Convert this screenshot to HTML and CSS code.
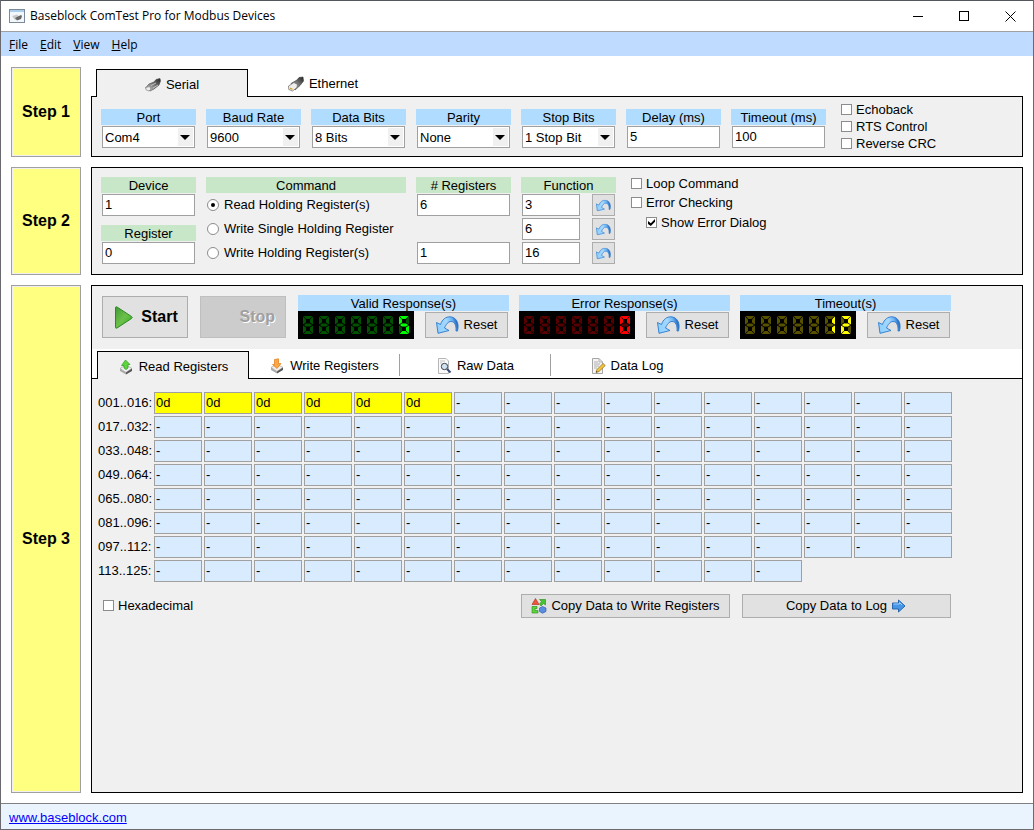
FILE: index.html
```html
<!DOCTYPE html>
<html lang="en">
<head>
<meta charset="utf-8">
<title>Baseblock ComTest Pro for Modbus Devices</title>
<link rel="stylesheet" href="styles.css">
</head>
<body>
<svg class="defs" aria-hidden="true">
  <defs>
    <linearGradient id="blue" x1="0" y1="0.5" x2="1" y2="0.3"><stop offset="0" stop-color="#8fd0ff"/><stop offset="0.5" stop-color="#a4d8ff"/><stop offset="0.75" stop-color="#6db4f4"/><stop offset="1" stop-color="#0d4fae"/></linearGradient>
    <linearGradient id="green" x1="0" y1="0" x2="1" y2="1"><stop offset="0" stop-color="#3f9a35"/><stop offset="0.5" stop-color="#6cc04a"/><stop offset="1" stop-color="#2fae1c"/></linearGradient>
    <linearGradient id="metal" x1="0" y1="1" x2="1" y2="0"><stop offset="0" stop-color="#e0e0e0"/><stop offset="0.5" stop-color="#7a7a7a"/><stop offset="1" stop-color="#222"/></linearGradient>
    <polygon id="sa" points="0.5,0 9.5,0 6.5,3 3.5,3"/>
    <polygon id="sb" points="10,0.5 10,8.5 7,6.5 7,3.5"/>
    <polygon id="sc" points="10,9.5 10,17.5 7,14.5 7,11.5"/>
    <polygon id="sd" points="0.5,18 3.5,15 6.5,15 9.5,18"/>
    <polygon id="se" points="0,9.5 3,11.5 3,14.5 0,17.5"/>
    <polygon id="sf" points="0,0.5 3,3.5 3,6.5 0,8.5"/>
    <polygon id="sg" points="1,9 3,7.5 7,7.5 9,9 7,10.5 3,10.5"/>
    <g id="n8"><use href="#sa"/><use href="#sb"/><use href="#sc"/><use href="#sd"/><use href="#se"/><use href="#sf"/><use href="#sg"/></g>
    <g id="n5"><use href="#sa"/><use href="#sf"/><use href="#sg"/><use href="#sc"/><use href="#sd"/></g>
    <g id="n0"><use href="#sa"/><use href="#sb"/><use href="#sc"/><use href="#sd"/><use href="#se"/><use href="#sf"/></g>
    <g id="n1"><use href="#sb"/><use href="#sc"/></g>
    <g id="n2"><use href="#sa"/><use href="#sb"/><use href="#sg"/><use href="#se"/><use href="#sd"/></g>
    <g id="row8"><use href="#n8" x="5" y="5"/><use href="#n8" x="21" y="5"/><use href="#n8" x="37" y="5"/><use href="#n8" x="53" y="5"/><use href="#n8" x="69" y="5"/><use href="#n8" x="85" y="5"/><use href="#n8" x="101" y="5"/></g>
  </defs>
  <symbol id="undo" viewBox="0 0 23 18">
    <path d="M0.500 6.500 L4.500 8.500 C6 3.500 10 0.600 14 0.800 C20 1.200 23.500 6.500 21.500 15 H20 C20.500 9 18.500 5.500 15 5.500 C12 5.500 10 8.500 8.500 12 L13 14.500 L2 17.300 Z" fill="url(#blue)" stroke="#2878cc" stroke-width="0.900" stroke-linejoin="round"/>
  </symbol>
  <symbol id="disk" viewBox="0 0 16 16">
    <path d="M2 9.500 L8 6 L14 9.500 L8 13.500 Z" fill="#eee" stroke="#999" stroke-width="0.600"/>
    <path d="M2 9.500 L8 13.500 L8 15.500 L2 12 Z" fill="#aaa"/>
    <path d="M14 9.500 L8 13.500 L8 15.500 L14 12 Z" fill="#555"/>
  </symbol>
</svg>

<div class="window">
  <header class="titlebar">
    <svg class="appicon" viewBox="0 0 16 14" aria-hidden="true">
      <rect x="0.500" y="0.500" width="15" height="13" fill="#f2f7fc" stroke="#7d8994"/>
      <rect x="1" y="1" width="14" height="2" fill="#a9cdec"/>
      <path d="M3 7 L8 5.500 L11 8 L6 11 Z" fill="#c9c9c9"/>
      <path d="M6 9 L12 6 L13 7 L12 10 L8 11.500 Z" fill="#666"/>
    </svg>
    <h1 class="title">Baseblock ComTest Pro for Modbus Devices</h1>
    <div class="winbtns">
      <button type="button" aria-label="Minimize"><svg viewBox="0 0 11 11"><path d="M0 5.500 H10" /></svg></button>
      <button type="button" aria-label="Maximize"><svg viewBox="0 0 11 11"><rect x="0.500" y="0.500" width="9" height="9"/></svg></button>
      <button type="button" aria-label="Close"><svg viewBox="0 0 11 11"><path d="M0.500 0.500 L10.500 10.500 M10.500 0.500 L0.500 10.500"/></svg></button>
    </div>
  </header>
  <nav class="menubar">
    <button type="button"><u>F</u>ile</button>
    <button type="button"><u>E</u>dit</button>
    <button type="button"><u>V</u>iew</button>
    <button type="button"><u>H</u>elp</button>
  </nav>

  <main class="steps">
    <h2 class="step">Step 1</h2>
    <section class="connection">
      <div class="tabs" role="tablist">
        <button type="button" class="tab active" role="tab" aria-selected="true">
          <svg class="i16" viewBox="0 0 16 16"><path d="M0.500 11 L4 7 L9 5 L11 2.500 L15 1.500 L15.500 4 L14 8 L9 12 L5 14 Z" fill="url(#metal)" stroke="#444" stroke-width="0.600"/><path d="M0.800 10.500 L4.500 9.500 L6 12 L4 14 L1 12.800 Z" fill="#eee" stroke="#777" stroke-width="0.600"/><path d="M6 8.500 L11 6 M8 11 L13 8" stroke="#ddd" stroke-width="0.700"/></svg>Serial</button>
        <button type="button" class="tab" role="tab" aria-selected="false">
          <svg class="i16" viewBox="0 0 16 16"><path d="M3 7.500 L9 4 L11 1.500 L15 1 L15.500 5 L12 9.500 L7 14 Z" fill="url(#metal)" stroke="#333" stroke-width="0.600"/><path d="M0.500 10 L6 6.500 L9.500 8.500 L9 11.500 L4.500 15 L0.800 13.500 Z" fill="#eee" stroke="#666" stroke-width="0.700"/><path d="M2 11.500 L4.500 12.500 V14 L2 13 Z" fill="#d2a528"/></svg>Ethernet</button>
      </div>
      <form class="panel serial">
        <div class="field"><label class="cap blue" for="port">Port</label><span class="sel"><select id="port"><option>Com4</option></select></span></div>
        <div class="field"><label class="cap blue" for="baud">Baud Rate</label><span class="sel"><select id="baud"><option>9600</option></select></span></div>
        <div class="field"><label class="cap blue" for="bits">Data Bits</label><span class="sel"><select id="bits"><option>8 Bits</option></select></span></div>
        <div class="field"><label class="cap blue" for="parity">Parity</label><span class="sel"><select id="parity"><option>None</option></select></span></div>
        <div class="field"><label class="cap blue" for="stopbits">Stop Bits</label><span class="sel"><select id="stopbits"><option>1 Stop Bit</option></select></span></div>
        <div class="field"><label class="cap blue" for="delay">Delay (ms)</label><input class="txt" id="delay" type="text" value="5"></div>
        <div class="field"><label class="cap blue" for="timeout">Timeout (ms)</label><input class="txt" id="timeout" type="text" value="100"></div>
        <div class="checks tight">
          <label><input type="checkbox">Echoback</label>
          <label><input type="checkbox">RTS Control</label>
          <label><input type="checkbox">Reverse CRC</label>
        </div>
      </form>
    </section>

    <h2 class="step">Step 2</h2>
    <form class="panel command">
      <div class="field stack">
        <div class="field"><label class="cap green" for="device">Device</label><input class="txt" id="device" type="text" value="1"></div>
        <div class="field"><label class="cap green" for="register">Register</label><input class="txt" id="register" type="text" value="0"></div>
      </div>
      <div class="field wide" role="radiogroup" aria-labelledby="cmd">
        <span class="cap green" id="cmd">Command</span>
        <div class="rows">
          <label class="radio"><input type="radio" name="cmd" checked>Read Holding Register(s)</label>
          <label class="radio"><input type="radio" name="cmd">Write Single Holding Register</label>
          <label class="radio"><input type="radio" name="cmd">Write Holding Register(s)</label>
        </div>
      </div>
      <div class="field">
        <span class="cap green" id="nreg"># Registers</span>
        <div class="rows">
          <input class="txt" type="text" value="6" aria-labelledby="nreg">
          <span class="row"></span>
          <input class="txt" type="text" value="1" aria-labelledby="nreg">
        </div>
      </div>
      <div class="field">
        <span class="cap green" id="fn">Function</span>
        <div class="rows">
          <div class="row"><input class="txt short" type="text" value="3" aria-labelledby="fn"><button type="button" class="btn mini" aria-label="Reset function"><svg viewBox="0 0 23 18"><use href="#undo"/></svg></button></div>
          <div class="row"><input class="txt short" type="text" value="6" aria-labelledby="fn"><button type="button" class="btn mini" aria-label="Reset function"><svg viewBox="0 0 23 18"><use href="#undo"/></svg></button></div>
          <div class="row"><input class="txt short" type="text" value="16" aria-labelledby="fn"><button type="button" class="btn mini" aria-label="Reset function"><svg viewBox="0 0 23 18"><use href="#undo"/></svg></button></div>
        </div>
      </div>
      <div class="checks">
        <label><input type="checkbox">Loop Command</label>
        <label><input type="checkbox">Error Checking</label>
        <label class="sub"><input type="checkbox" checked>Show Error Dialog</label>
      </div>
    </form>

    <h2 class="step">Step 3</h2>
    <section class="panel run">
      <div class="runbar">
        <div class="runbtns">
          <button type="button" class="btn big"><svg class="play" viewBox="0 0 20 23"><path d="M1.500 1.500 Q1.500 0.500 3 1 L17.500 10.500 Q19 11.500 17.500 12.500 L3 22 Q1.500 22.500 1.500 21.500 Z" fill="url(#green)" stroke="#2c8a22"/></svg>Start</button>
          <button type="button" class="btn big" disabled>Stop</button>
        </div>
        <div class="counters">
          <div class="counter">
            <span class="cap blue">Valid Response(s)</span>
            <div class="meter"><svg class="led" viewBox="0 0 116 28" role="img" aria-label="5"><use href="#row8" fill="#005200"/><use href="#n5" x="101" y="5" fill="#00ff00"/></svg>
            <button type="button" class="btn reset"><svg viewBox="0 0 23 18"><use href="#undo"/></svg>Reset</button></div>
          </div>
          <div class="counter">
            <span class="cap blue">Error Response(s)</span>
            <div class="meter"><svg class="led" viewBox="0 0 116 28" role="img" aria-label="0"><use href="#row8" fill="#560000"/><use href="#n0" x="101" y="5" fill="#ff0000"/></svg>
            <button type="button" class="btn reset"><svg viewBox="0 0 23 18"><use href="#undo"/></svg>Reset</button></div>
          </div>
          <div class="counter">
            <span class="cap blue">Timeout(s)</span>
            <div class="meter"><svg class="led" viewBox="0 0 116 28" role="img" aria-label="12"><use href="#row8" fill="#585200"/><use href="#n1" x="85" y="5" fill="#ffff00"/><use href="#n2" x="101" y="5" fill="#ffff00"/></svg>
            <button type="button" class="btn reset"><svg viewBox="0 0 23 18"><use href="#undo"/></svg>Reset</button></div>
          </div>
        </div>
      </div>

      <div class="tabs views" role="tablist">
        <button type="button" class="tab active" role="tab" aria-selected="true">
          <svg class="i16" viewBox="0 0 16 16"><use href="#disk"/><path d="M7.500 1 L12 5.500 H10 V9 L8 10.500 L6 9 V6.500 L3.500 6.500 Z" fill="#5fd43c" stroke="#2c9a1c" stroke-width="0.700"/></svg>Read Registers</button>
        <button type="button" class="tab" role="tab" aria-selected="false">
          <svg class="i16" viewBox="0 0 16 16"><use href="#disk"/><path d="M5.500 1.500 L9.500 0.800 V5.500 H12 L8 10.500 L3.500 6.500 H5.500 Z" fill="#ffa640" stroke="#e07a18" stroke-width="0.700"/></svg>Write Registers</button>
        <button type="button" class="tab" role="tab" aria-selected="false">
          <svg class="i16" viewBox="0 0 16 16"><path d="M2.500 0.500 H10 L12.500 3 V15.500 H2.500 Z" fill="#fafafa" stroke="#b5b5b5"/><path d="M4 3 H9 M4 5 H6" stroke="#c5c5c5"/><circle cx="8.500" cy="8.500" r="3.200" fill="#cfe3f6" stroke="#444"/><path d="M11 11 L14.500 14.500" stroke="#3a4a78" stroke-width="2"/></svg>Raw Data</button>
        <button type="button" class="tab" role="tab" aria-selected="false">
          <svg class="i16" viewBox="0 0 16 16"><path d="M2.500 0.500 H9 L12.500 4 V15.500 H2.500 Z" fill="#f4f4f4" stroke="#a5a5a5"/><path d="M9 0.500 V4 H12.500 M4 4 H8 M4 6 H10 M4 8 H9 M4 10 H7" stroke="#b0b0b0" fill="none"/><path d="M6 14.500 L7 11.500 L13 5.500 L15.300 7.500 L9 13.500 Z" fill="#f5c33b" stroke="#8a6a20" stroke-width="0.700"/><path d="M6 14.500 L6.500 13 L7.500 14 Z" fill="#333"/></svg>Data Log</button>
      </div>

      <div class="view">
        <table class="registers">
          <tr><th scope="row">001..016:</th><td class="hit">0d</td><td class="hit">0d</td><td class="hit">0d</td><td class="hit">0d</td><td class="hit">0d</td><td class="hit">0d</td><td>-</td><td>-</td><td>-</td><td>-</td><td>-</td><td>-</td><td>-</td><td>-</td><td>-</td><td>-</td></tr>
          <tr><th scope="row">017..032:</th><td>-</td><td>-</td><td>-</td><td>-</td><td>-</td><td>-</td><td>-</td><td>-</td><td>-</td><td>-</td><td>-</td><td>-</td><td>-</td><td>-</td><td>-</td><td>-</td></tr>
          <tr><th scope="row">033..048:</th><td>-</td><td>-</td><td>-</td><td>-</td><td>-</td><td>-</td><td>-</td><td>-</td><td>-</td><td>-</td><td>-</td><td>-</td><td>-</td><td>-</td><td>-</td><td>-</td></tr>
          <tr><th scope="row">049..064:</th><td>-</td><td>-</td><td>-</td><td>-</td><td>-</td><td>-</td><td>-</td><td>-</td><td>-</td><td>-</td><td>-</td><td>-</td><td>-</td><td>-</td><td>-</td><td>-</td></tr>
          <tr><th scope="row">065..080:</th><td>-</td><td>-</td><td>-</td><td>-</td><td>-</td><td>-</td><td>-</td><td>-</td><td>-</td><td>-</td><td>-</td><td>-</td><td>-</td><td>-</td><td>-</td><td>-</td></tr>
          <tr><th scope="row">081..096:</th><td>-</td><td>-</td><td>-</td><td>-</td><td>-</td><td>-</td><td>-</td><td>-</td><td>-</td><td>-</td><td>-</td><td>-</td><td>-</td><td>-</td><td>-</td><td>-</td></tr>
          <tr><th scope="row">097..112:</th><td>-</td><td>-</td><td>-</td><td>-</td><td>-</td><td>-</td><td>-</td><td>-</td><td>-</td><td>-</td><td>-</td><td>-</td><td>-</td><td>-</td><td>-</td><td>-</td></tr>
          <tr><th scope="row">113..125:</th><td>-</td><td>-</td><td>-</td><td>-</td><td>-</td><td>-</td><td>-</td><td>-</td><td>-</td><td>-</td><td>-</td><td>-</td><td>-</td></tr>
        </table>
        <div class="actions">
          <div class="checks"><label><input type="checkbox">Hexadecimal</label></div>
          <div class="copy">
            <button type="button" class="btn"><svg class="i16" viewBox="0 0 16 16"><path d="M4.500 0.500 L8 6.500 H1 Z" fill="#f0553a" stroke="#a82a18" stroke-width="0.600"/><path d="M8.500 1.500 H14.500 V7 L12.500 5.500 L10 8 L8.500 6 L10.500 3.500 Z" fill="#49c531" stroke="#248a18" stroke-width="0.600"/><path d="M1 8.500 H6 V10.500 H4 V12.500 H7 V15 H1 Z" fill="#5fd43c" stroke="#248a18" stroke-width="0.600"/><path d="M8.500 10 L11.500 8.500 L15 10 V13.500 L11.500 15.200 L8.500 13.500 Z" fill="#5a8ee0" stroke="#2a50a0" stroke-width="0.600"/></svg>Copy Data to Write Registers</button>
            <button type="button" class="btn">Copy Data to Log<svg class="i16" viewBox="0 0 16 16"><path d="M1.500 5 H7.500 V2 L14 8 L7.500 14 V11 H1.500 Z" fill="#4796e6" stroke="#1c5ca8" stroke-width="0.900"/><path d="M2.500 6 H8.500 V4.500 L11 7" stroke="#9fd0ff" fill="none"/></svg></button>
          </div>
        </div>
      </div>
    </section>
  </main>
  <footer class="status"><a href="#">www.baseblock.com</a></footer>
</div>
</body>
</html>
```
FILE: styles.css
```css
* { box-sizing: border-box; }
body {
  margin: 0;
  background: #fff;
  color: #000;
  font: 13px/16px "Liberation Sans", Arial, sans-serif;
}
button, input, select { font: inherit; color: inherit; margin: 0; padding: 0; border-radius: 0; }
svg { display: block; flex: none; }
.defs { position: absolute; width: 0; height: 0; }

.window {
  display: flex;
  flex-direction: column;
  min-height: 100vh;
  border: 1px solid #6a6a6e;
  border-top-color: #54565e;
}
.titlebar {
  display: flex;
  align-items: center;
  height: 31px;
  padding-left: 8px;
  border-bottom: 1px solid #a0a0a0;
}
.appicon { width: 16px; height: 14px; }
.title {
  flex: 1;
  margin: 0 0 0 5px;
  font: 12px/16px "Open Sans", "Noto Sans", sans-serif;
}
.winbtns { display: flex; }
.winbtns button {
  display: grid;
  place-items: center;
  width: 46px;
  height: 28px;
  border: 0;
  background: none;
}
.winbtns svg { width: 11px; height: 11px; fill: none; stroke: #000; }

.menubar {
  display: flex;
  gap: 12px;
  height: 24px;
  padding-left: 8px;
  background: #bfdbff;
}
.menubar button {
  padding-top: 2px;
  border: 0;
  background: none;
  font: 12px/22px "Open Sans", "Noto Sans", sans-serif;
}

.steps {
  flex: 1;
  display: grid;
  grid-template: auto auto 1fr / 70px 1fr;
  gap: 10px;
  padding: 11px 10px 10px;
}
.step {
  display: grid;
  place-items: center;
  margin: 0;
  background: #ffff80;
  border: 1px solid #a0a0a0;
  box-shadow: inset 0 0 0 1px #f0f0f0;
  font-size: 16px;
}
.panel { background: #f0f0f0; border: 1px solid #000; }

.tabs { display: flex; background: #fff; border-bottom: 1px solid #000; }
.tab {
  display: flex;
  align-items: center;
  justify-content: center;
  gap: 5px;
  width: 150px;
  padding-top: 2px;
  border: 0;
  background: none;
}
.tab.active {
  width: 152px;
  height: 28px;
  margin-bottom: -1px;
  background: #f0f0f0;
  border: 1px solid #000;
  border-bottom: 0;
}
.i16 { width: 16px; height: 16px; }

.connection .tabs { margin-top: 2px; padding-left: 5px; }
.serial { border-top: 0; }
.serial, .command { display: flex; gap: 10px; }
.serial { padding: 4px 9px; }
.serial > .field { margin-top: 8px; }
.command { padding: 6px 9px 10px; }
.command > .field { margin-top: 3px; }

.field { width: 95px; display: flex; flex-direction: column; gap: 1px; }
.field.wide { width: 200px; }
.field.stack { gap: 9px; }
.cap { display: block; height: 16px; line-height: 18px; text-align: center; }
.cap.blue { background: #b0dcff; }
.cap.green { background: #c8e6c8; }
.txt, .sel {
  display: block;
  width: 93px;
  height: 22px;
  margin: 0 1px;
  background: #fff;
  border: 1px solid #a0a0a0;
}
.txt { padding: 0 2px 1px; }
.txt.short { width: 58px; }
.sel { position: relative; }
.sel select {
  appearance: none;
  width: 100%;
  height: 20px;
  padding: 1px 0 0 2px;
  border: 0;
  background: linear-gradient(#f0f0f0, #f0f0f0) right 1px center / 15px 18px no-repeat #fff;
}
.sel::after {
  content: "";
  position: absolute;
  right: 4px;
  top: 8px;
  width: 10px;
  height: 5px;
  background: #000;
  clip-path: polygon(0 0, 100% 0, 50% 100%);
  pointer-events: none;
}
.rows { display: flex; flex-direction: column; gap: 2px; }
.row, .radio { display: flex; height: 22px; }
.row { justify-content: space-between; }
.radio { align-items: center; gap: 5px; padding-left: 1px; }
.row .txt { margin-right: 0; }

.checks { display: flex; flex-direction: column; margin-left: 5px; }
.checks label { display: flex; align-items: center; gap: 4px; height: 19px; }
.checks.tight label { height: 17px; }
.checks .sub { padding-left: 15px; height: 21px; }
input[type="checkbox"], input[type="radio"] {
  appearance: none;
  display: grid;
  place-items: center;
  flex: none;
  width: 11px;
  height: 11px;
  background: #fff;
  border: 1px solid #8c8c8c;
}
input[type="radio"] { width: 12px; height: 12px; border-radius: 50%; }
input[type="radio"]:checked::before {
  content: "";
  width: 4px;
  height: 4px;
  border-radius: 50%;
  background: #000;
}
input[type="checkbox"]:checked::before {
  content: "";
  width: 7px;
  height: 7px;
  background: #000;
  clip-path: polygon(0 30%, 40% 60%, 100% 0, 100% 40%, 40% 100%, 0 70%);
}
.checks label, .radio { white-space: nowrap; line-height: 18px; }

.btn {
  display: flex;
  align-items: center;
  justify-content: center;
  background: #e1e1e1;
  border: 1px solid #adadad;
  white-space: nowrap;
}
.btn.mini { width: 23px; margin-right: 1px; }
.mini svg { width: 15px; height: 13px; }

.run { display: flex; flex-direction: column; }
.runbar { display: flex; gap: 12px; padding: 9px 10px 10px; }
.runbtns { display: flex; gap: 12px; margin: 1px 0; }
.btn.big { width: 86px; gap: 7px; padding-left: 2px; font-size: 16px; font-weight: 700; }
.btn.big:disabled {
  justify-content: flex-end;
  padding-right: 10px;
  color: #a0a0a0;
  background: #ccc;
  border-color: #bfbfbf;
  text-shadow: 1px 1px #fff;
}
.play { width: 20px; height: 23px; }
.counters { display: flex; gap: 10px; }
.counter { width: 211px; }
.meter { display: flex; align-items: center; justify-content: space-between; }
.led { width: 116px; height: 28px; background: #000; }
.btn.reset { width: 83px; height: 26px; margin-right: 1px; gap: 5px; }
.reset svg { width: 23px; height: 18px; }

.views { height: 30px; padding: 2px 0 0 5px; }
.views .tab { width: 151px; height: 22px; margin-top: 3px; border-right: 1px solid #a0a0a0; }
.views .tab:last-child { border-right: 0; }
.views .tab.active { width: 152px; height: 28px; margin-top: 0; border-right-color: #000; }

.view { padding: 11px 4px 11px; }
.registers { border-spacing: 2px; table-layout: fixed; width: 858px; }
.registers th { width: 54px; padding: 0; font-weight: 400; text-align: left; white-space: nowrap; }
.registers td { height: 22px; padding: 0 0 0 1px; background: #d9ebff; border: 1px solid #a0a0a0; }
.registers td.hit { background: #ff0; }
.actions { display: flex; justify-content: space-between; width: 855px; padding-top: 10px; }
.actions .checks { margin-left: 7px; padding-top: 2px; }
.copy { display: flex; gap: 12px; }
.copy .btn { width: 209px; height: 24px; gap: 4px; }

.status {
  height: 26px;
  padding: 6px 8px 0;
  border-top: 1px solid #808080;
  background: #eaf4ff;
}
.status a { color: #00f; }
```
